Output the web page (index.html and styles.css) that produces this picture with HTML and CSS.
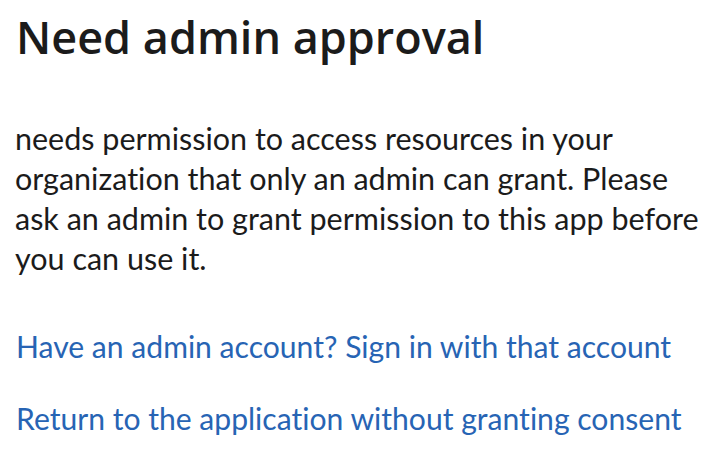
FILE: index.html
```html
<!DOCTYPE html>
<html lang="en">
<head>
<meta charset="utf-8">
<title>Need admin approval</title>
<link rel="stylesheet" href="styles.css">
</head>
<body>
<main class="consent">
  <h1 class="title">Need admin approval</h1>
  <p class="message">needs permission to access resources in your organization that only an admin can grant. Please ask an admin to grant permission to this app before you can use it.</p>
  <div class="actions">
    <a class="link" href="#">Have an admin account? Sign in with that account</a>
    <a class="link" href="#">Return to the application without granting consent</a>
  </div>
</main>
</body>
</html>
```
FILE: styles.css
```css
html, body {
  margin: 0;
  padding: 0;
  background: #ffffff;
}
.consent {
  padding: 9px 15px 0 15px;
  color: #1b1b1b;
  font-variant-ligatures: none;
}
.title {
  margin: 0;
  font-family: "Open Sans", sans-serif;
  font-weight: 600;
  font-size: 45px;
  line-height: 56px;
  color: #1b1b1b;
  padding-left: 1px;
}
.message {
  margin: 53px 0 0 0;
  font-family: Lato, sans-serif;
  font-size: 30.5px;
  line-height: 40px;
  width: 700px;
}
.actions {
  margin-top: 48px;
  display: flex;
  flex-direction: column;
  align-items: flex-start;
  gap: 32px;
  padding-left: 1px;
}
.link {
  font-family: Lato, sans-serif;
  font-size: 30.1px;
  line-height: 40px;
  color: #2764b4;
  text-decoration: none;
}
```
